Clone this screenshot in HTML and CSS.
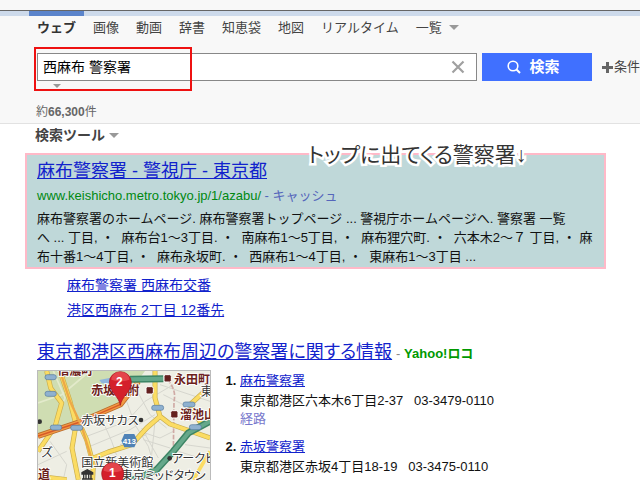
FILE: index.html
```html
<!DOCTYPE html>
<html lang="ja">
<head>
    <meta charset="UTF-8">
    <meta name="viewport" content="width=device-width, initial-scale=1.0">
    <title>西麻布 警察署 - 検索</title>
    <link rel="stylesheet" href="styles.css">
</head>
<body>
    <header class="header">
        <nav class="nav">
            <a href="#" class="nav-item active">ウェブ</a>
            <a href="#" class="nav-item">画像</a>
            <a href="#" class="nav-item">動画</a>
            <a href="#" class="nav-item">辞書</a>
            <a href="#" class="nav-item">知恵袋</a>
            <a href="#" class="nav-item">地図</a>
            <a href="#" class="nav-item">リアルタイム</a>
            <a href="#" class="nav-item">一覧<span class="arrow"></span></a>
        </nav>

        <form class="search">
            <div class="search-box">
                <input type="text" class="search-input" value="西麻布 警察署" aria-label="検索キーワード">
                <button type="reset" class="clear" aria-label="クリア">
                    <svg width="14" height="14" viewBox="0 0 14 14"><path d="M1.500 1.500 12.500 12.500M12.500 1.500 1.500 12.500" stroke="#a0a0a0" stroke-width="2.200"/></svg>
                </button>
            </div>
            <button type="button" class="search-button">
                <svg width="14" height="14" viewBox="0 0 14 14" fill="none" stroke="#fff"><circle cx="6" cy="6" r="4.800" stroke-width="1.600"/><path d="M9.500 9.500 13 13" stroke-width="2"/></svg>
                検索
            </button>
            <a href="#" class="condition">
                <svg width="11" height="11" viewBox="0 0 11 11"><path d="M5.500 0V11M0 5.500H11" stroke="#666" stroke-width="3"/></svg>条件
            </a>
            <div class="mark"></div>
        </form>
        <div class="suggest"><span class="arrow small"></span></div>
        <p class="count">約<b>66,300</b>件</p>
    </header>

    <main class="main">
        <a href="#" class="tools">検索ツール<span class="arrow"></span></a>

        <section class="result highlight">
            <h2 class="title"><a href="#">麻布警察署 - 警視庁 - 東京都</a></h2>
            <p class="url">www.keishicho.metro.tokyo.jp/1/azabu/ <a href="#" class="cache">- キャッシュ</a></p>
            <p class="text">麻布警察署のホームページ. 麻布警察署トップページ ... 警視庁ホームページへ. 警察署 一覧<br>
                へ ... 丁目, ・&nbsp; 麻布台1～3丁目. ・&nbsp; 南麻布1～5丁目, ・&nbsp; 麻布狸穴町. ・&nbsp; 六本木2～７ 丁目, ・ 麻<br>
                布十番1～4丁目, ・&nbsp; 麻布永坂町. ・&nbsp; 西麻布1～4丁目, ・&nbsp; 東麻布1～3丁目 ...</p>
            <div class="note">トップに出てくる警察署↓</div>
        </section>

        <ul class="sub-links">
            <li><a href="#">麻布警察署 西麻布交番</a></li>
            <li><a href="#">港区西麻布 2丁目 12番先</a></li>
        </ul>

        <section class="local">
            <div class="local-head">
                <h2 class="title"><a href="#">東京都港区西麻布周辺の警察署に関する情報</a></h2>
                <span class="source">- <b>Yahoo!ロコ</b></span>
            </div>
            <div class="local-body">
                <!-- Map, drawn at three units to the pixel -->
                <svg class="map" viewBox="24 19 516 390">
                    <rect x="24" y="19" width="516" height="390" fill="#eeeee4"/>
                    <path d="M24 19H345L275 112 150 166 24 212Z" fill="#cfddb2"/>
                    <path d="M70 19 105 100 65 190M24 115 95 90 180 19" stroke="#e3eacb" stroke-width="5" fill="none"/>
                    <path d="M208 46 250 38 260 58 215 56Z" fill="#8fb5dd"/>
                    <!-- Side streets -->
                    <g stroke="#d6d6ce" stroke-width="3" fill="none">
                        <path d="M170 215 290 170 345 110 430 60M180 245 300 195 375 150M210 150 245 230 270 300M290 110 315 180 355 245 375 315M325 85 360 150 410 190M270 240 350 210M335 190 385 280"/>
                        <path d="M330 200 390 220 430 200M340 225 420 250M375 170 365 270M390 60 540 110M400 90 520 150M445 260 540 290M465 240 540 250M60 230 110 300 100 345M24 300 110 260"/>
                    </g>
                    <path d="M412 45Q440 75 432 110L430 260" stroke="#cfaaa5" stroke-width="5" stroke-dasharray="14 5" fill="none"/>
                    <!-- Main roads -->
                    <g fill="none" stroke-linejoin="round">
                        <g stroke="#c9ad4d" stroke-width="15">
                            <path d="M50 19 62 70 95 115 75 186 24 260M90 19 120 110 138 180 126 250 145 345M150 180 170 225 190 300 185 409M375 19 375 100 390 155 420 178 540 220M390 155 350 190 305 240 235 262 190 280M540 65 480 120 515 180M24 335 110 345"/>
                        </g>
                        <g stroke="#fbdc63" stroke-width="11">
                            <path d="M50 19 62 70 95 115 75 186 24 260M90 19 120 110 138 180 126 250 145 345M150 180 170 225 190 300 185 409M375 19 375 100 390 155 420 178 540 220M390 155 350 190 305 240 235 262 190 280M540 65 480 120 515 180M24 335 110 345M490 345 540 260"/>
                        </g>
                        <path d="M24 214 150 172 272 119 325 50" stroke="#b96b2c" stroke-width="17"/>
                        <path d="M24 214 150 172 272 119 325 50" stroke="#f29a44" stroke-width="12"/>
                        <path d="M24 214 150 172 272 119" stroke="#d75a28" stroke-width="4"/>
                        <path d="M90 19 120 110 155 185 190 300" stroke="#eda947" stroke-width="7"/>
                    </g>
                    <!-- Expressway -->
                    <path d="M300 44 400 42M540 170 475 205 430 260 380 315 300 350" stroke="#3d8565" stroke-width="21" fill="none"/>
                    <path d="M300 44 400 42M540 170 475 205 430 260 380 315 300 350" stroke="#65a88a" stroke-width="12" fill="none"/>
                    <g fill="#8fb1cf" stroke="#53799e" stroke-width="2">
                        <rect x="45" y="30" width="34" height="15" rx="7"/><rect x="45" y="80" width="34" height="15" rx="7"/>
                        <rect x="61" y="181" width="34" height="15" rx="7"/><rect x="122" y="182" width="36" height="15" rx="7"/>
                        <rect x="365" y="122" width="36" height="15" rx="7"/><rect x="459" y="112" width="36" height="15" rx="7"/>
                        <rect x="478" y="180" width="36" height="15" rx="7"/>
                    </g>
                    <path d="M283 208H313L322 228 313 248H283L274 228Z" fill="#4f82b6"/>
                    <text x="298" y="237" class="map-route">413</text>
                    <g fill="#64201f" stroke="#fff" stroke-width="3">
                        <rect x="402" y="30" width="22" height="22" rx="5"/><rect x="348" y="66" width="22" height="22" rx="5"/><rect x="422" y="138" width="22" height="22" rx="5"/>
                    </g>
                    <g class="map-station">
                        <text x="82" y="31">信濃町</text>
                        <text x="432" y="58">永田町</text>
                        <text x="184" y="92">赤坂見附</text>
                        <text x="450" y="164">溜池山王</text>
                        <text x="24" y="343">道</text>
                    </g>
                    <g class="map-place">
                        <text x="512" y="93">東</text>
                        <text x="154" y="180">赤坂サカス</text>
                        <text x="34" y="277">ズ</text>
                        <text x="154" y="307">国立新美術館</text>
                        <text x="426" y="294">アークヒルズ</text>
                        <text x="272" y="346">東京ミッドタウン</text>
                    </g>
                    <g fill="#333"><circle cx="333" cy="166" r="7"/><circle cx="419" cy="281" r="7"/><circle cx="29" cy="171" r="7"/></g>
                    <path d="M156 324 172 315 188 324V328H156ZM161 330V341M168 330V341M176 330V341M183 330V341M156 343H188" fill="#333" stroke="#333" stroke-width="4"/>
                    <g fill="#d4202b" stroke="#a5101b" stroke-width="2">
                        <path d="M271 122C267 95 238 82 238 53A33 32 0 0 1 304 53C304 82 275 95 271 122Z"/>
                        <path d="M248 395C244 368 215 355 215 326A33 32 0 0 1 281 326C281 355 252 368 248 395Z"/>
                    </g>
                    <path d="M244 45A27 24 0 0 1 298 45Q271 55 244 45ZM221 318A27 24 0 0 1 275 318Q248 328 221 318Z" fill="#ef5d60" opacity="0.6"/>
                    <text x="268" y="64" class="map-pin">2</text>
                    <text x="247" y="338" class="map-pin">1</text>
                </svg>
                <ol class="places">
                    <li>
                        <a href="#">麻布警察署</a>
                        <p>東京都港区六本木6丁目2-37 &nbsp; 03-3479-0110</p>
                        <a href="#" class="route">経路</a>
                    </li>
                    <li>
                        <a href="#">赤坂警察署</a>
                        <p>東京都港区赤坂4丁目18-19 &nbsp; 03-3475-0110</p>
                    </li>
                </ol>
            </div>
        </section>
    </main>
</body>
</html>
```
FILE: styles.css
```css
html {
    height: 100%;
    overflow: hidden;
}

body {
    margin: 0;
    height: 100%;
    overflow: hidden;
    background: #fff;
    color: #111;
    font-family: "Liberation Sans", "Noto Sans CJK JP", sans-serif;
    font-size: 13px;
    line-height: 18px;
}

h2, p, ul, ol {
    margin: 0;
    padding: 0;
    font-weight: normal;
}

a {
    color: #1122cc;
}

/* Header */
.header {
    padding-top: 10px;
    background: #f8f8f8;
    border-bottom: 1px solid #e2e2e2;
}

.nav {
    display: flex;
    gap: 1px;
    padding-left: 29px;
    border-top: 1px solid #666;
    background: linear-gradient(#cddaeb 5px, transparent 5px);
}

.nav-item {
    padding: 3px 8px;
    border-top: 5px solid transparent;
    color: #444;
    text-decoration: none;
    white-space: nowrap;
}

.nav-item.active {
    border-color: #5b84cb;
    color: #333;
    font-weight: bold;
}

.arrow {
    display: inline-block;
    margin-left: 7px;
    border: 5px solid transparent;
    border-top-color: #999;
    border-bottom: 0;
    vertical-align: 2px;
}

.arrow.small {
    margin: 0;
    border-width: 4px 4px 0;
}

.search {
    position: relative;
    display: flex;
    align-items: center;
    margin: 13px 0 0 37px;
}

.search-box {
    display: flex;
    flex: 1;
    min-width: 0;
    height: 26px;
    border: 1px solid #888;
    background: #fff;
}

.search-input {
    flex: 1;
    min-width: 0;
    padding: 0 5px;
    border: 0;
    background: none;
    color: #000;
    font: inherit;
    font-size: 14px;
}

.clear {
    display: flex;
    align-items: center;
    padding: 0 11px;
    border: 0;
    background: none;
}

.search-button {
    display: flex;
    align-items: center;
    justify-content: center;
    gap: 8px;
    width: 110px;
    height: 28px;
    margin-left: 5px;
    padding: 0 7px 0 0;
    border: 0;
    background: #4070ff;
    color: #fff;
    font: inherit;
    font-size: 15px;
    font-weight: bold;
}

.condition {
    display: flex;
    align-items: center;
    gap: 1px;
    margin-left: 10px;
    color: #444;
    text-decoration: none;
    white-space: nowrap;
}

/* Red frame round the keyword */
.mark {
    position: absolute;
    top: -6px;
    left: -3px;
    width: 154px;
    height: 40px;
    border: 2px solid #ee1111;
}

.suggest {
    display: flex;
    height: 22px;
    padding: 3px 0 0 16px;
    margin-left: 37px;
    box-sizing: border-box;
}

.count {
    padding-left: 36px;
    padding-bottom: 2px;
    color: #666;
    font-size: 12px;
}

/* Results */
.main {
    padding: 2px 34px 0 25px;
}

.tools {
    display: block;
    margin-left: 10px;
    color: #444;
    font-size: 14px;
    font-weight: bold;
    text-decoration: none;
}

.tools .arrow {
    margin-left: 4px;
}

.title {
    font-size: 18px;
    line-height: 26px;
    font-feature-settings: "palt";
}

.highlight {
    position: relative;
    margin-top: 9px;
    padding: 3px 0 1px 10px;
    border: 2px solid #ffb9c8;
    background: #bfd8d9;
}

.url {
    padding: 3px 0 4px;
    color: #008811;
}

.cache {
    color: #5566bb;
    text-decoration: none;
}

.text {
    line-height: 19px;
    white-space: nowrap;
}

.note {
    position: absolute;
    top: -16px;
    left: 281px;
    color: #333;
    font-size: 21px;
    line-height: 32px;
    white-space: nowrap;
    font-feature-settings: "palt";
    -webkit-text-stroke: 5px #fff;
    paint-order: stroke fill;
}

.sub-links {
    display: grid;
    gap: 7px;
    margin: 7px 0 0 42px;
    list-style: none;
    font-size: 14px;
}

.local {
    margin: 20px 0 0 12px;
}

.local-head {
    display: flex;
    align-items: baseline;
    gap: 4px;
    white-space: nowrap;
}

.source {
    color: #888;
    font-feature-settings: "palt";
}

.source b {
    color: #009900;
}

.local-body {
    display: flex;
    align-items: flex-start;
    gap: 29px;
    margin-top: 5px;
}

.map {
    flex: none;
    width: 172px;
    height: 130px;
    border: 1px solid #bbb;
}

.places {
    padding-top: 2px;
}

.places li {
    margin-bottom: 10px;
}

.places li::marker {
    font-weight: bold;
}

.places p {
    padding-top: 1px;
    line-height: 19px;
}

.route {
    color: #7777cc;
    text-decoration: none;
}

/* Map labels */
.map-station,
.map-place {
    font-size: 36px;
    stroke: #fff;
    stroke-width: 5px;
    paint-order: stroke fill;
}

.map-station {
    fill: #6d1f1c;
    font-weight: bold;
}

.map-place {
    fill: #333;
    font-feature-settings: "palt";
}

.map-route,
.map-pin {
    fill: #fff;
    font-weight: bold;
    text-anchor: middle;
}

.map-route {
    font-size: 24px;
}

.map-pin {
    font-size: 36px;
}
```
